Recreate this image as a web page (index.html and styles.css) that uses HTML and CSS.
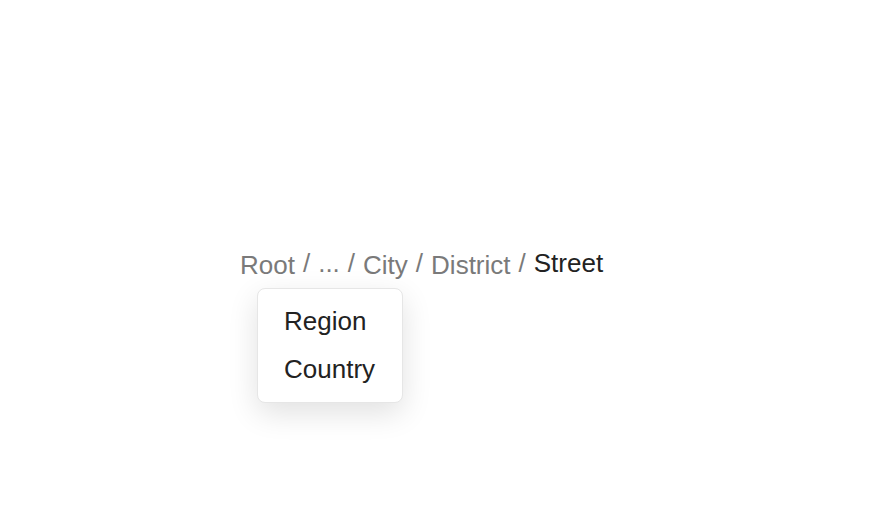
FILE: index.html
```html
<!DOCTYPE html>
<html>
<head>
<meta charset="utf-8">
<link rel="stylesheet" href="styles.css">
</head>
<body>
<main class="stage">
  <nav class="crumbs">
    <a class="crumb link" href="#">Root</a>
    <span class="sep">/</span>
    <span class="crumb ellipsis">...</span>
    <span class="sep">/</span>
    <a class="crumb link" href="#">City</a>
    <span class="sep">/</span>
    <a class="crumb link" href="#">District</a>
    <span class="sep">/</span>
    <span class="crumb current">Street</span>
    <ul class="menu">
      <li>Region</li>
      <li>Country</li>
    </ul>
  </nav>
</main>
</body>
</html>
```
FILE: styles.css
```css
html, body {
  margin: 0;
  padding: 0;
  background: #fff;
}
body {
  font-family: "Liberation Sans", Arial, sans-serif;
  width: 880px;
  height: 528px;
}
.stage {
  padding-top: 248px;
  padding-left: 240px;
}
.crumbs {
  position: relative;
  display: flex;
  align-items: flex-start;
  font-size: 26px;
  line-height: 30px;
}
.crumb, .sep {
  display: block;
}
.link {
  color: #7a7a7a;
  text-decoration: none;
  padding-top: 2px;
}
.ellipsis {
  color: #7a7a7a;
}
.sep {
  color: #7a7a7a;
  margin: 0 8px;
}
.current {
  color: #222;
}
.menu {
  position: absolute;
  left: 17px;
  top: 40px;
  margin: 0;
  padding: 8px 27px 9px 26px;
  list-style: none;
  background: #fff;
  border: 1px solid #e6e6e6;
  border-radius: 8px;
  box-shadow: 0 10px 30px rgba(0, 0, 0, 0.12);
  color: #222;
  font-size: 26px;
  line-height: 48px;
}
.menu li {
  white-space: nowrap;
}
```
